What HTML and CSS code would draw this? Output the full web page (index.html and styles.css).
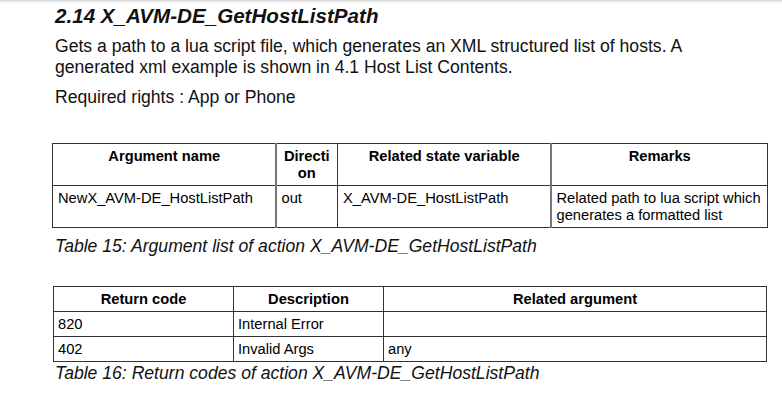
FILE: index.html
```html
<!DOCTYPE html>
<html>
<head>
<meta charset="utf-8">
<link rel="stylesheet" href="styles.css">
</head>
<body>
<div class="page">
  <h2 class="title">2.14 X_AVM-DE_GetHostListPath</h2>
  <p class="text">Gets a path to a lua script file, which generates an XML structured list of hosts. A generated xml example is shown in 4.1 Host List Contents.</p>
  <p class="text rights">Required rights : App or Phone</p>

  <table class="grid args">
    <colgroup>
      <col class="c-name"><col class="c-dir"><col class="c-var"><col class="c-rem">
    </colgroup>
    <tr class="head">
      <th>Argument name</th>
      <th>Directi on</th>
      <th>Related state variable</th>
      <th>Remarks</th>
    </tr>
    <tr>
      <td>NewX_AVM-DE_HostListPath</td>
      <td>out</td>
      <td>X_AVM-DE_HostListPath</td>
      <td>Related path to lua script which generates a formatted list</td>
    </tr>
  </table>
  <p class="caption cap1">Table 15: Argument list of action X_AVM-DE_GetHostListPath</p>

  <table class="grid codes">
    <colgroup>
      <col class="c-code"><col class="c-desc"><col class="c-arg">
    </colgroup>
    <tr class="head">
      <th>Return code</th>
      <th>Description</th>
      <th>Related argument</th>
    </tr>
    <tr>
      <td>820</td>
      <td>Internal Error</td>
      <td></td>
    </tr>
    <tr>
      <td>402</td>
      <td>Invalid Args</td>
      <td>any</td>
    </tr>
  </table>
  <p class="caption cap2">Table 16: Return codes of action X_AVM-DE_GetHostListPath</p>
</div>
</body>
</html>
```
FILE: styles.css
```css
html, body {
  margin: 0;
  padding: 0;
}
body {
  width: 782px;
  height: 396px;
  overflow: hidden;
  background: linear-gradient(#d4d4d4, #f4f4f4 2px, #ffffff 4px) no-repeat;
  background-color: #fff;
  font-family: "Liberation Sans", Arial, sans-serif;
  color: #000;
}
.page {
  padding: 4px 15px 0 52px;
}
.title {
  margin: 0 0 0 3px;
  font-size: 20.6px;
  line-height: 24px;
  font-weight: bold;
  font-style: italic;
  color: #111;
}
.text {
  margin: 8px 0 0 3px;
  max-width: 665px;
  font-size: 17.6px;
  line-height: 21px;
  color: #111;
}
.text.rights {
  margin-top: 9px;
}
.grid {
  border-collapse: collapse;
  table-layout: fixed;
  font-size: 14.7px;
  line-height: 17px;
  color: #000;
}
.grid th, .grid td {
  border: 1px solid #333;
  padding: 4px 4px 3px 5px;
  vertical-align: top;
  text-align: left;
  overflow: hidden;
}
.grid th {
  font-weight: bold;
  text-align: center;
}
.args {
  margin-top: 35px;
  width: 715px;
}
.args .c-name { width: 223px; }
.args .c-dir { width: 62px; }
.args .c-var { width: 213px; }
.args .c-rem { width: 217px; }
.args th:nth-child(2), .args td:nth-child(2) { border-left: 2px solid #777; }
.args th:nth-child(4), .args td:nth-child(4) { border-left: 2px solid #777; }
.args th:nth-child(2) { padding-left: 3px; padding-right: 3px; word-break: break-all; }
.args tr:not(.head) td {
  height: 34px;
}
.codes {
  margin-top: 30px;
  margin-left: 1px;
  width: 713px;
}
.codes .c-code { width: 180px; }
.codes .c-desc { width: 150px; }
.codes .c-arg { width: 383px; }
.codes td, .codes th {
  padding-top: 4px;
  padding-bottom: 3px;
  padding-left: 4px;
}
.caption {
  margin: 8px 0 0 3px;
  font-size: 17.6px;
  line-height: 20px;
  font-style: italic;
  color: #111;
}
.cap2 {
  margin-top: 1px;
}
```
